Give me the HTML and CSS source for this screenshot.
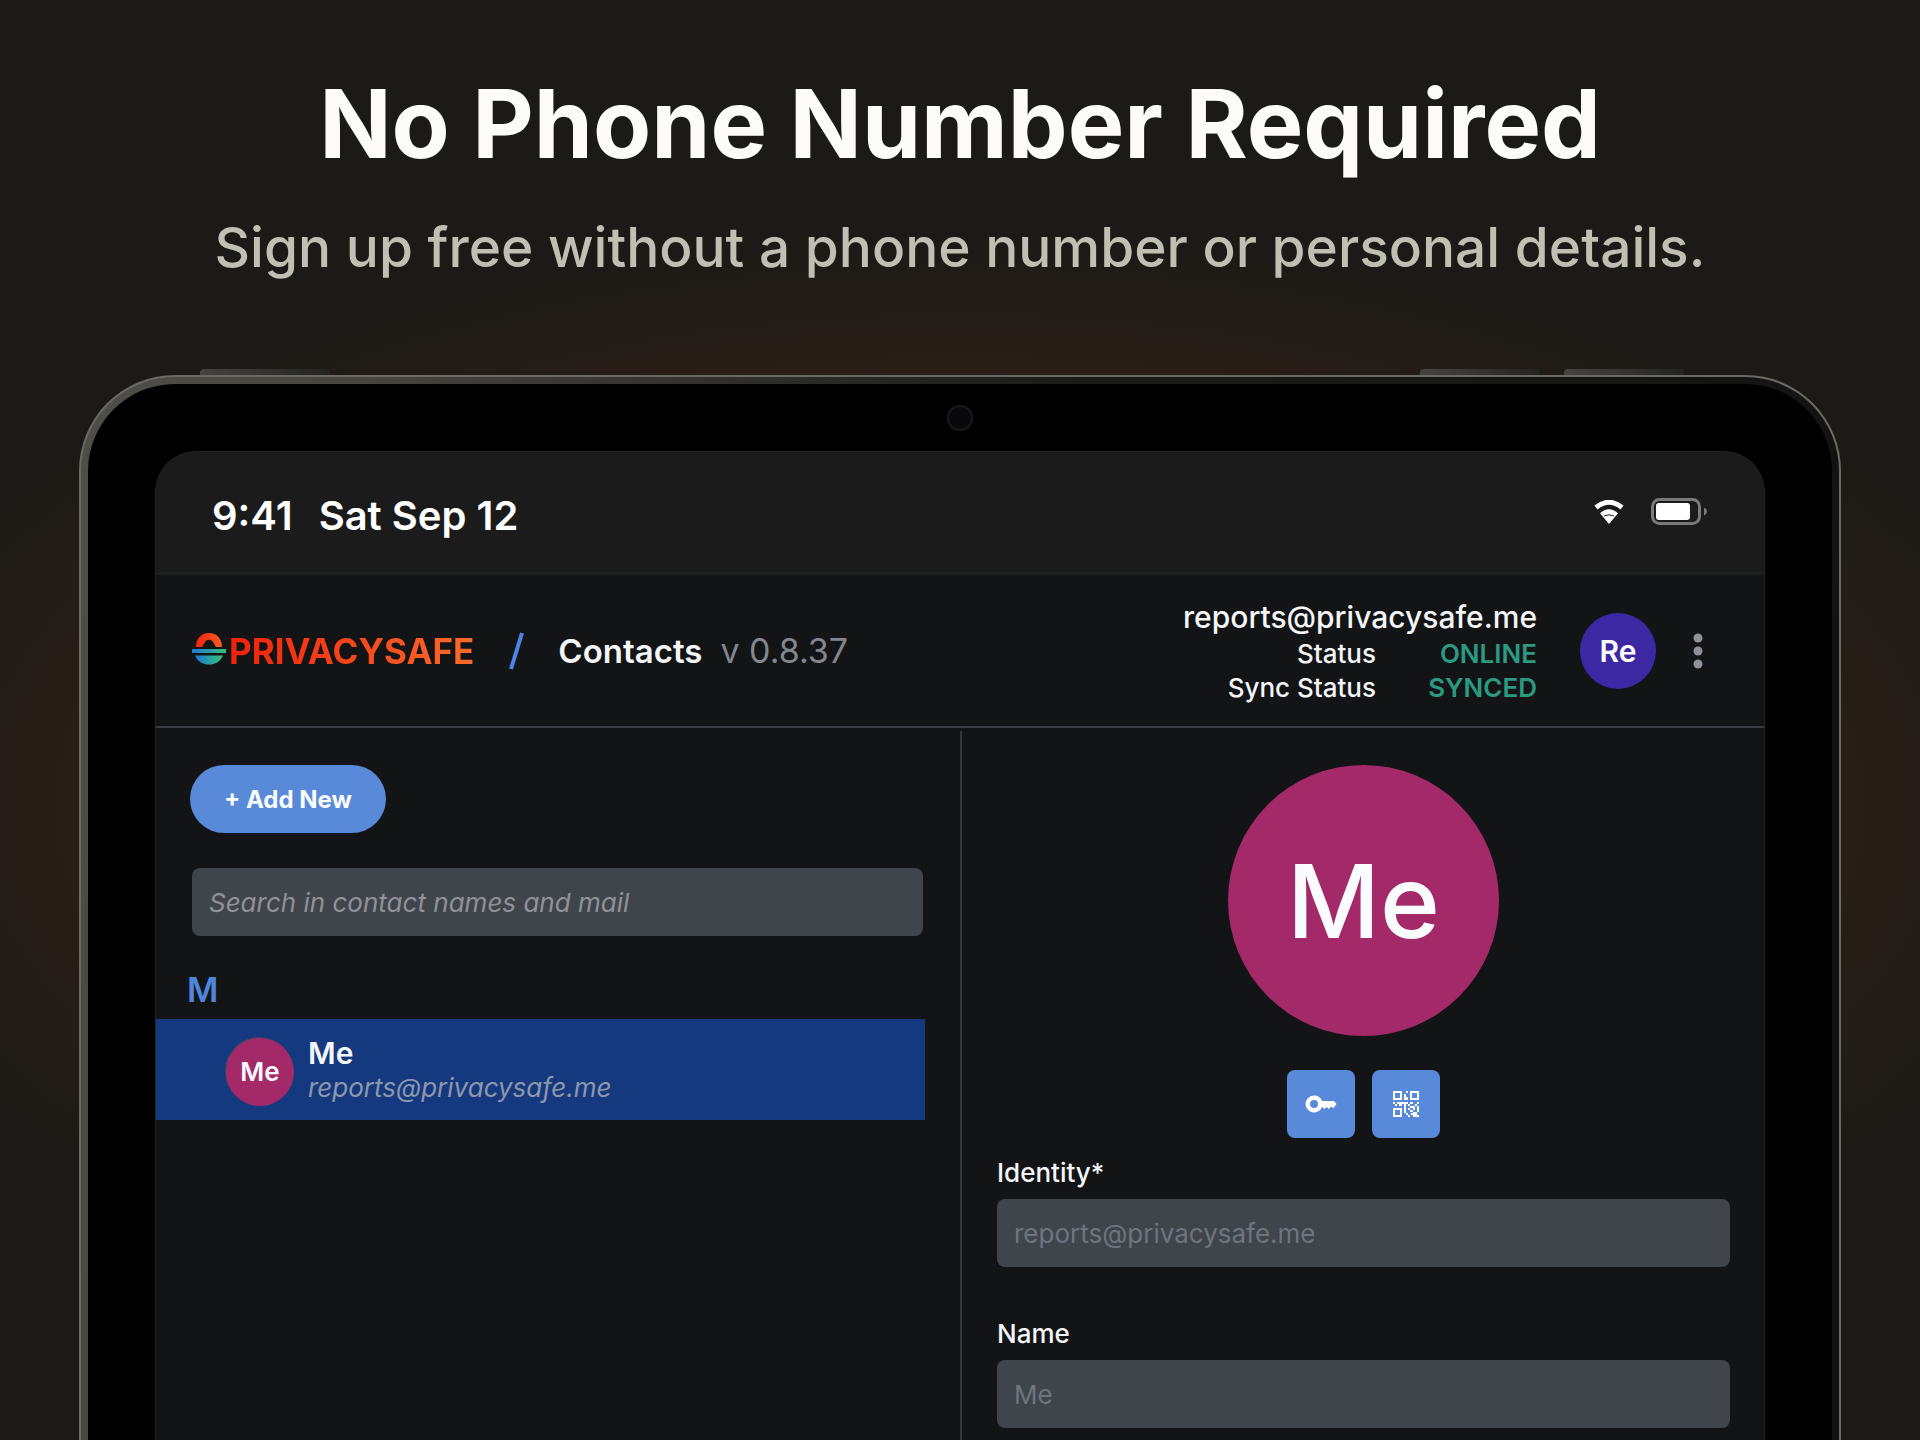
FILE: index.html
```html
<!DOCTYPE html>
<html lang="en">

<head>
    <meta charset="utf-8">
    <meta name="viewport" content="width=device-width, initial-scale=1.0">
    <title>PrivacySafe Contacts</title>
    <link rel="stylesheet" href="styles.css">
</head>

<body>
    <div class="page">
        <h1>No Phone Number Required</h1>
        <p class="subtitle">Sign up free without a phone number or personal details.</p>

        <div class="tablet">
            <span class="side-btn power"></span>
            <span class="side-btn vol-up"></span>
            <span class="side-btn vol-down"></span>
            <div class="bezel">
                <span class="camera"></span>
                <div class="screen">

                    <div class="statusbar">
                        <div class="clock"><span>9:41</span><span>Sat Sep 12</span></div>
                        <div class="indicators">
                            <svg width="30" height="24" viewBox="0 0 30 24" fill="none">
                                <path d="M2 7.5Q15 -3 28 7.5" stroke="#fff" stroke-width="5" />
                                <path d="M6 13.2Q15 5.5 24 13.2L15 24Z" fill="#fff" />
                                <path d="M10 16Q15 13.5 20 16" stroke="#1b1b1b" stroke-width="1" />
                            </svg>
                            <svg width="56" height="28" viewBox="0 0 56 28" fill="none">
                                <rect x="1.5" y="1.5" width="47" height="24" rx="7" stroke="#7a7a7a" stroke-width="3" />
                                <rect x="5" y="5" width="34" height="17" rx="3" fill="#fff" />
                                <path d="M53 9.5Q56 11 56 13.5Q56 16 53 17.5Z" fill="#7a7a7a" />
                            </svg>
                        </div>
                    </div>

                    <div class="topbar">
                        <a href="#" class="logo">
                            <svg width="34" height="36" viewBox="0 0 34 36">
                                <defs>
                                    <linearGradient id="arc" x1="0" x2="1" y1="0" y2="0">
                                        <stop offset="0" stop-color="#f3240c" />
                                        <stop offset="1" stop-color="#ff5a26" />
                                    </linearGradient>
                                    <linearGradient id="sea" x1="0" x2="1" y1="0" y2="0">
                                        <stop offset="0" stop-color="#1f78d8" />
                                        <stop offset="1" stop-color="#35c277" />
                                    </linearGradient>
                                </defs>
                                <path d="M4 14C4 6 9 0 17 0S30 6 30 14H24L21 9C19 6 15 6 13 9L10 14Z" fill="url(#arc)" />
                                <rect x="0" y="16" width="34" height="4" fill="url(#sea)" />
                                <path d="M3 22.5H31C28 29 23 31.5 17 31.5S6 29 3 22.5Z" fill="url(#sea)" />
                            </svg>
                            <span class="brand">PRIVACYSAFE</span>
                        </a>
                        <svg class="slash" width="16" height="38" viewBox="0 0 16 38">
                            <path d="M2 37L13 1" stroke="#4a86e8" stroke-width="4" />
                        </svg>
                        <span class="app-name">Contacts</span>
                        <span class="version">v 0.8.37</span>

                        <div class="account">
                            <span class="mail">reports@privacysafe.me</span>
                            <span>Status</span><span class="state">ONLINE</span>
                            <span>Sync Status</span><span class="state">SYNCED</span>
                        </div>
                        <span class="avatar avatar-user">Re</span>
                        <button class="menu" aria-label="Menu">
                            <svg width="10" height="36" viewBox="0 0 10 36" fill="#8f929a">
                                <circle cx="5" cy="5" r="4.5" />
                                <circle cx="5" cy="18" r="4.5" />
                                <circle cx="5" cy="31" r="4.5" />
                            </svg>
                        </button>
                    </div>

                    <div class="content">
                        <div class="list">
                            <button class="add">+ Add New</button>
                            <input class="search" type="text" aria-label="Search contacts" placeholder="Search in contact names and mail">
                            <h2>M</h2>
                            <a href="#" class="contact">
                                <span class="avatar avatar-small">Me</span>
                                <span class="contact-text">
                                    <span class="contact-name">Me</span>
                                    <span class="contact-mail">reports@privacysafe.me</span>
                                </span>
                            </a>
                        </div>

                        <div class="details">
                            <span class="avatar avatar-big">Me</span>
                            <div class="actions">
                                <button aria-label="Show key">
                                    <svg width="32" height="20" viewBox="0 0 32 20">
                                        <path fill-rule="evenodd" fill="#fff" d="M9 1.5A8.5 8.5 0 0 1 17 7H29L31.5 10L28.5 14L26 12.5L24 15L21.5 13L19.5 15L17 13A8.5 8.5 0 1 1 9 1.5ZM9 6A4 4 0 1 0 9 14A4 4 0 0 0 9 6Z" />
                                    </svg>
                                </button>
                                <button aria-label="Show QR code">
                                    <svg width="26" height="26" viewBox="0 0 26 26" fill="#fff">
                                        <path fill-rule="evenodd" d="M0 0H9V9H0ZM2 2V7H7V2ZM17 0H26V9H17ZM19 2V7H24V2ZM0 17H9V26H0ZM2 19V24H7V19Z" />
                                        <path d="M13 0H15V2H13V6H15V9H11V3H13ZM0 11H2V13H0ZM4 11H6V13H4ZM2 13H4V15H2ZM6 11H15V13H13V15H11V13H9V15H6ZM17 11H20V13H17ZM22 13H24V11H26V13H24V15H22ZM15 13H17V15H15ZM11 15H13V22H11ZM17 15H22V17H17ZM24 15H26V21H24ZM15 17H17V19H15ZM20 17H22V19H20ZM13 22H15V24H13ZM15 24H17V26H15ZM17 19H20V21H17ZM20 21H24V24H26V26H20V24H18V22H20Z" />
                                    </svg>
                                </button>
                            </div>
                            <div class="field">
                                <label for="identity">Identity*</label>
                                <input id="identity" type="text" placeholder="reports@privacysafe.me">
                            </div>
                            <div class="field">
                                <label for="name">Name</label>
                                <input id="name" type="text" placeholder="Me">
                            </div>
                        </div>
                    </div>

                </div>
            </div>
        </div>
    </div>
</body>

</html>
```
FILE: styles.css
```css
* {
    box-sizing: border-box;
}

body {
    margin: 0;
    font-family: Inter, "Liberation Sans", sans-serif;
    background-color: #1b1a16;
    color: #f4f5f7;
}

button,
input {
    font-family: inherit;
    border: none;
}

a {
    color: inherit;
    text-decoration: none;
}

svg {
    display: block;
}

.page {
    height: 100vh;
    overflow: hidden;
    display: flex;
    flex-direction: column;
    padding: 68px 79px 0;
    /* Warm glow behind the tablet */
    background: radial-gradient(ellipse 60% 40% at 50% 56%, rgba(190, 60, 30, 0.4) 0%, rgba(190, 60, 30, 0.2) 50%, rgba(190, 60, 30, 0.07) 80%, rgba(190, 60, 30, 0) 100%);
}

h1 {
    margin: 0;
    font-size: 95px;
    line-height: 112px;
    font-weight: 700;
    text-align: center;
    color: #fcfbf7;
}

.subtitle {
    margin: 31px 0 92px;
    font-size: 55px;
    line-height: 72px;
    font-weight: 500;
    text-align: center;
    color: #c1beb3;
}

/* Tablet frame */
.tablet {
    position: relative;
    flex: 1;
    display: flex;
    padding: 7px 7px 0;
    border: 2px solid #6b6966;
    border-bottom: none;
    border-radius: 96px 96px 0 0;
    background: linear-gradient(100deg, #4f4e49 0%, #45443f 15%, #1c1c1b 50%, #111 100%);
}

.side-btn {
    position: absolute;
    top: -8px;
    width: 120px;
    height: 6px;
    border-radius: 4px 4px 0 0;
    background: linear-gradient(90deg, #454440, #232321);
}

.power {
    left: 119px;
    width: 130px;
}

.vol-up {
    right: 299px;
}

.vol-down {
    right: 155px;
}

.bezel {
    position: relative;
    flex: 1;
    display: flex;
    padding: 68px 68px 0;
    border-radius: 87px 87px 0 0;
    background: #000;
}

.camera {
    position: absolute;
    top: 21px;
    left: calc(50% - 13px);
    width: 26px;
    height: 26px;
    border: 2px solid #1a1a1c;
    border-radius: 50%;
    background: #08080a;
}

.screen {
    flex: 1;
    display: flex;
    flex-direction: column;
    overflow: hidden;
    border-radius: 40px 40px 0 0;
    background: #131416;
    box-shadow: 0 0 0 1px #232323;
}

.statusbar {
    display: flex;
    justify-content: space-between;
    align-items: center;
    height: 123px;
    padding: 0 57px 0 56px;
    border-bottom: 3px solid #1f2020;
    background: #1b1b1b;
}

.clock {
    display: flex;
    gap: 26px;
    padding-top: 6px;
    font-size: 40px;
    font-weight: 600;
    color: #fff;
}

.indicators {
    display: flex;
    align-items: center;
    gap: 27px;
}

/* App header */
.topbar {
    display: flex;
    align-items: center;
    height: 153px;
    padding: 0 46px 0 36px;
    border-bottom: 2px solid #3b3c41;
}

.logo {
    display: flex;
    align-items: center;
    gap: 3px;
}

.brand {
    font-size: 35px;
    font-weight: 700;
    background: linear-gradient(90deg, #f0220c, #fb6a2c);
    -webkit-background-clip: text;
    background-clip: text;
    color: transparent;
}

.slash {
    margin: 0 33px 0 35px;
}

.app-name {
    font-size: 33px;
    font-weight: 600;
}

.version {
    margin-left: 18px;
    font-size: 34px;
    color: #82868f;
}

.account {
    display: grid;
    grid-template-columns: 1fr 161px;
    margin-left: auto;
    font-size: 26px;
    line-height: 34px;
    font-weight: 500;
    text-align: right;
}

.mail {
    grid-column: span 2;
    font-size: 30px;
    line-height: 40px;
}

.state {
    font-weight: 600;
    color: #2a9a80;
}

.avatar {
    display: flex;
    justify-content: center;
    align-items: center;
    flex: none;
    border-radius: 50%;
    background: #a32968;
    font-weight: 500;
    color: #fafbff;
}

.avatar-user {
    width: 76px;
    height: 76px;
    margin: 0 22px 0 43px;
    background: #3d28a3;
    font-size: 30px;
    font-weight: 600;
}

.menu {
    display: flex;
    justify-content: center;
    width: 40px;
    padding: 0;
    background: none;
}

.content {
    flex: 1;
    display: grid;
    grid-template-columns: 1fr 1fr;
    padding-top: 3px;
}

/* Contact list */
.list {
    padding: 34px 35px 0 0;
}

.add {
    display: block;
    height: 68px;
    margin-left: 34px;
    padding: 0 34px;
    border-radius: 34px;
    background: #588ad9;
    font-size: 24px;
    font-weight: 700;
    color: #fafbff;
}

.search,
.field input {
    display: block;
    height: 68px;
    padding: 0 17px;
    border-radius: 8px;
    background: #40444b;
    font-size: 26px;
    color: #f4f5f7;
}

.search {
    width: calc(100% - 38px);
    margin: 35px 2px 0 36px;
}

.search::placeholder {
    font-style: italic;
    color: #8f9298;
}

h2 {
    margin: 34px 0 9px 31px;
    font-size: 34px;
    line-height: 40px;
    font-weight: 600;
    color: #4f86dc;
}

.contact {
    display: flex;
    align-items: center;
    gap: 14px;
    height: 101px;
    padding-left: 70px;
    background: #15397f;
}

.avatar-small {
    width: 68px;
    height: 68px;
    margin-top: 4px;
    font-size: 26px;
    font-weight: 600;
    box-shadow: -1px -1px 0 #454660;
}

.contact-text {
    display: flex;
    flex-direction: column;
}

.contact-name {
    font-size: 30px;
    line-height: 36px;
    font-weight: 600;
}

.contact-mail {
    font-size: 26px;
    line-height: 34px;
    font-style: italic;
    color: #8d97ab;
}

/* Contact details */
.details {
    display: flex;
    flex-direction: column;
    padding: 34px 34px 0 35px;
    border-left: 2px solid #34353a;
}

.avatar-big {
    align-self: center;
    width: 271px;
    height: 271px;
    font-size: 102px;
}

.actions {
    display: flex;
    justify-content: center;
    gap: 17px;
    margin: 34px 0 18px;
}

.actions button {
    display: flex;
    justify-content: center;
    align-items: center;
    width: 68px;
    height: 68px;
    padding: 0;
    border-radius: 8px;
    background: #588ad9;
}

.field {
    margin-bottom: 50px;
}

.field label {
    display: block;
    margin-bottom: 9px;
    font-size: 26px;
    line-height: 34px;
    font-weight: 500;
}

.field input {
    width: 100%;
}

.field input::placeholder {
    color: #6f757e;
}
```
